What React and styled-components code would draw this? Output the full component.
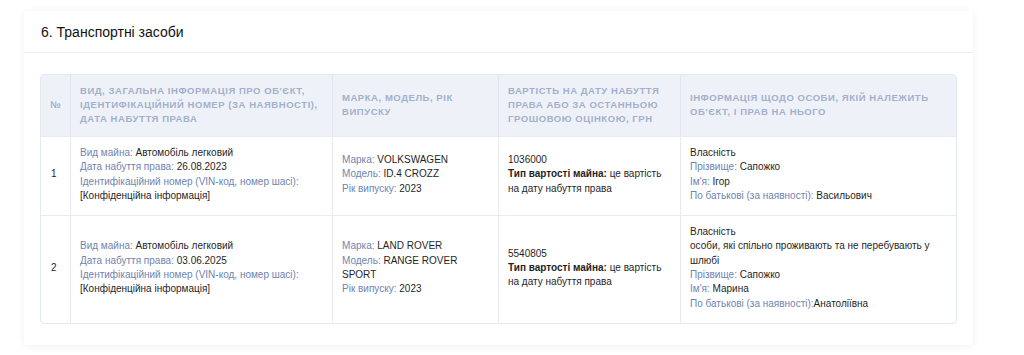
import React from "react";
import styled, { createGlobalStyle } from "styled-components";

const GlobalStyle = createGlobalStyle`
  body {
    margin: 0;
    background: #ffffff;
    font-family: "Liberation Sans", Arial, sans-serif;
    color: #1f1f1f;
  }
`;

const Page = styled.div`
  padding: 11px 51px 11px 24px;
`;

const Card = styled.section`
  background: #fff;
  border-radius: 4px;
  box-shadow: 0 1px 10px rgba(0, 0, 0, 0.06);
`;

const CardHeader = styled.header`
  height: 41px;
  display: flex;
  align-items: center;
  padding: 0 17px;
  border-bottom: 1px solid #eeeff2;
  font-size: 14px;
  color: #111;
`;

const CardBody = styled.div`
  padding: 21px 16px 21px;
`;

const Table = styled.table`
  width: 100%;
  border-collapse: separate;
  border-spacing: 0;
  border: 1px solid #e4e8ef;
  border-radius: 4px;
  table-layout: fixed;
  font-size: 10px;
`;

const Th = styled.th`
  background: #eef2f8;
  color: #a2b0cc;
  font-weight: 700;
  font-size: 9.5px;
  text-transform: uppercase;
  letter-spacing: 0.55px;
  text-align: ${(p) => (p.$center ? "center" : "left")};
  vertical-align: middle;
  line-height: 14px;
  padding: 9px 9px 10px;
  border-left: ${(p) => (p.$first ? "none" : "1px solid #e2e7ef")};
  &:first-child {
    border-top-left-radius: 4px;
  }
  &:last-child {
    border-top-right-radius: 4px;
  }
`;

const Td = styled.td`
  vertical-align: middle;
  line-height: 14.3px;
  padding: 9px ${(p) => p.$pr || 24}px 12px ${(p) => (p.$first ? 10 : 9)}px;
  color: #1f1f1f;
  border-top: 1px solid #e8ebf0;
  border-left: ${(p) => (p.$first ? "none" : "1px solid #e8ebf0")};
`;

const Line = styled.div``;

const Label = styled.span`
  color: #6f84b0;
`;

const Strong = styled.b`
  font-weight: 700;
`;

const rows = [
  {
    n: 1,
    date: "26.08.2023",
    brand: "VOLKSWAGEN",
    model: "ID.4 CROZZ",
    year: "2023",
    cost: "1036000",
    owner: [
      ["", "Власність"],
      ["Прізвище: ", "Сапожко"],
      ["Ім'я: ", "Ігор"],
      ["По батькові (за наявності): ", "Васильович"],
    ],
  },
  {
    n: 2,
    date: "03.06.2025",
    brand: "LAND ROVER",
    model: "RANGE ROVER SPORT",
    year: "2023",
    cost: "5540805",
    owner: [
      ["", "Власність"],
      ["", "особи, які спільно проживають та не перебувають у шлюбі"],
      ["Прізвище: ", "Сапожко"],
      ["Ім'я: ", "Марина"],
      ["По батькові (за наявності):", "Анатоліївна"],
    ],
  },
];

const Field = ({ label, value }) => (
  <Line>
    {label && <Label>{label}</Label>}
    {value}
  </Line>
);

export default function App() {
  return (
    <>
      <GlobalStyle />
      <Page>
        <Card>
          <CardHeader>6. Транспортні засоби</CardHeader>
          <CardBody>
            <Table>
              <colgroup>
                <col style={{ width: 29 }} />
                <col style={{ width: 262 }} />
                <col style={{ width: 166 }} />
                <col style={{ width: 182 }} />
                <col />
              </colgroup>
              <thead>
                <tr>
                  <Th $first $center>№</Th>
                  <Th>
                    Вид, загальна інформація про об'єкт, ідентифікаційний номер
                    (за наявності), дата набуття права
                  </Th>
                  <Th>Марка, модель, рік випуску</Th>
                  <Th>
                    Вартість на дату набуття права або за останньою грошовою
                    оцінкою, грн
                  </Th>
                  <Th>Інформація щодо особи, якій належить об'єкт, і прав на нього</Th>
                </tr>
              </thead>
              <tbody>
                {rows.map((r) => (
                  <tr key={r.n}>
                    <Td $first>{r.n}</Td>
                    <Td>
                      <Field label="Вид майна: " value="Автомобіль легковий" />
                      <Field label="Дата набуття права: " value={r.date} />
                      <Field label="Ідентифікаційний номер (VIN-код, номер шасі):" />
                      <Field value="[Конфіденційна інформація]" />
                    </Td>
                    <Td>
                      <Field label="Марка: " value={r.brand} />
                      <Field label="Модель: " value={r.model} />
                      <Field label="Рік випуску: " value={r.year} />
                    </Td>
                    <Td $pr={16}>
                      <Line>{r.cost}</Line>
                      <Line>
                        <Strong>Тип вартості майна:</Strong> це вартість на дату
                        набуття права
                      </Line>
                    </Td>
                    <Td>
                      {r.owner.map(([l, v], i) => (
                        <Field key={i} label={l} value={v} />
                      ))}
                    </Td>
                  </tr>
                ))}
              </tbody>
            </Table>
          </CardBody>
        </Card>
      </Page>
    </>
  );
}
